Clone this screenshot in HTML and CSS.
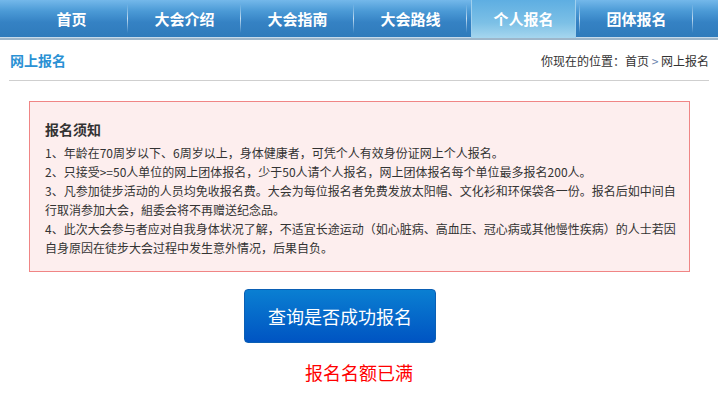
FILE: index.html
```html
<!DOCTYPE html>
<html lang="zh-CN">
<head>
    <meta charset="UTF-8">
    <title>网上报名</title>
    <link rel="stylesheet" href="styles.css">
</head>
<body>
    <div class="nav">
        <ul>
            <li><a href="#">首页</a></li>
            <li><a href="#">大会介绍</a></li>
            <li><a href="#">大会指南</a></li>
            <li><a href="#">大会路线</a></li>
            <li class="active"><a href="#">个人报名</a></li>
            <li><a href="#">团体报名</a></li>
        </ul>
    </div>

    <div class="main">
        <div class="page-head">
            <h2>网上报名</h2>
            <div class="crumb">你现在的位置：<a href="#">首页</a> <span class="gt">&gt;</span> 网上报名</div>
        </div>

        <div class="notice">
            <h3>报名须知</h3>
            <p>1、年龄在70周岁以下、6周岁以上，身体健康者，可凭个人有效身份证网上个人报名。</p>
            <p>2、只接受&gt;=50人单位的网上团体报名，少于50人请个人报名，网上团体报名每个单位最多报名200人。</p>
            <p>3、凡参加徒步活动的人员均免收报名费。大会为每位报名者免费发放太阳帽、文化衫和环保袋各一份。报名后如中间自行取消参加大会，組委会将不再赠送纪念品。</p>
            <p>4、此次大会参与者应对自我身体状况了解，不适宜长途运动（如心脏病、高血压、冠心病或其他慢性疾病）的人士若因自身原因在徒步大会过程中发生意外情况，后果自负。</p>
        </div>

        <div class="actions">
            <button class="btn-query">查询是否成功报名</button>
        </div>
        <p class="full">报名名额已满</p>
    </div>
</body>
</html>
```

FILE: styles.css
```css
body {
    margin: 0;
    font-family: "Noto Sans CJK SC", "DejaVu Sans", sans-serif;
    font-size: 12px;
    color: #333;
    background: #fff;
}
a {
    color: inherit;
    text-decoration: none;
}

/* top menu */
.nav {
    height: 37px;
    background: linear-gradient(#74b8ea 0%, #4b9ad6 30%, #3582c4 60%, #2f7bbb 100%);
    border-bottom: 1px solid #c6dbeb;
    box-shadow: 0 2px 0 #9db6ca;
}
.nav ul {
    list-style: none;
    margin: 0;
    padding: 0 0 0 15px;
    display: flex;
    height: 37px;
}
.nav li {
    width: 113px;
    position: relative;
    display: flex;
    justify-content: center;
    align-items: center;
}
.nav li::after {
    content: "";
    position: absolute;
    right: 0;
    top: 4px;
    bottom: 4px;
    width: 1px;
    background: linear-gradient(rgba(255,255,255,0), rgba(210,230,245,0.9) 50%, rgba(255,255,255,0));
}
.nav li a {
    color: #fff;
    font-size: 15px;
    font-weight: bold;
}
.nav li.active::before {
    content: "";
    position: absolute;
    left: 4px;
    right: 4px;
    top: 0;
    bottom: -1px;
    background: linear-gradient(#5eaee2, #7cc0e6 60%, #a6d6ee);
    border-left: 1px solid #9fd0ee;
    border-right: 1px solid #9fd0ee;
}
.nav li.active a {
    position: relative;
}

.main {
    padding: 0 9px;
}
.page-head {
    display: flex;
    justify-content: space-between;
    align-items: center;
    height: 40px;
    margin-top: 2px;
    border-bottom: 1px solid #cfcfcf;
}
.page-head h2 {
    margin: 0 0 0 1px;
    font-size: 14px;
    color: #2a91d4;
}
.crumb {
    font-size: 12px;
    color: #333;
}
.crumb .gt {
    color: #6c86b0;
}

/* notice box */
.notice {
    margin: 20px 19px 0 20px;
    padding: 15px 10px 14px 15px;
    background: #fdeeee;
    border: 1px solid #f08585;
}
.notice h3 {
    margin: 0 0 2px 0;
    font-size: 14px;
    line-height: 24px;
    color: #333;
}
.notice p {
    margin: 0;
    line-height: 19px;
}

.actions {
    padding: 17px 0 0 235px;
}
.btn-query {
    width: 192px;
    height: 54px;
    border: 1px solid #0a5fb4;
    border-radius: 4px;
    background: linear-gradient(#0a7fd2, #0054c2);
    color: #fff;
    font-family: inherit;
    font-size: 18px;
    cursor: pointer;
}
.full {
    margin: 16px 0 0 0;
    text-align: center;
    font-size: 18px;
    color: #f00;
}
```
